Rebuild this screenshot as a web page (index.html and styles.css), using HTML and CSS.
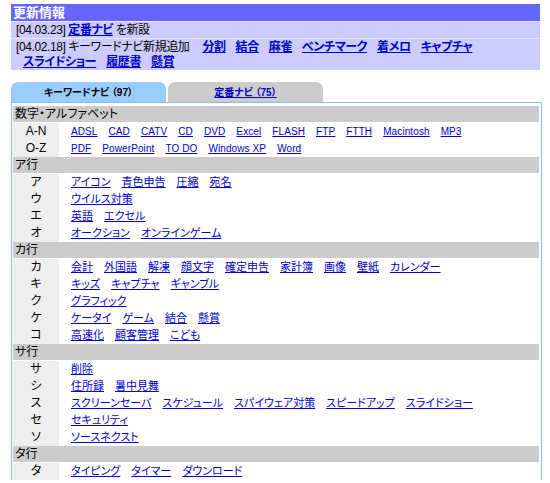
FILE: index.html
```html
<!DOCTYPE html>
<html lang="ja">
<head>
    <meta charset="UTF-8">
    <title>キーワードナビ</title>
    <link rel="stylesheet" href="styles.css">
</head>
<body>
    <div class="news">
        <div class="news-head">更新情報</div>
        <div class="news-row">[04.03.23] <a href="#">定番ナビ</a> を新設</div>
        <div class="news-row">
            <div class="line">[04.02.18] キーワードナビ新規追加
                <span class="links"><a href="#">分割</a><a href="#">結合</a><a href="#">麻雀</a><a href="#">ベンチマーク</a><a href="#">着メロ</a><a href="#">キャプチャ</a></span>
            </div>
            <div class="line indent">
                <span class="links"><a href="#">スライドショー</a><a href="#">履歴書</a><a href="#">懸賞</a></span>
            </div>
        </div>
    </div>

    <div class="tabs">
        <div class="tab active">キーワードナビ （97）</div>
        <div class="tab"><a href="#">定番ナビ （75）</a></div>
    </div>

    <div class="panel">
        <div class="group">数字・アルファベット</div>
        <div class="row latin"><div class="key">A-N</div><div class="words"><a href="#">ADSL</a><a href="#">CAD</a><a href="#">CATV</a><a href="#">CD</a><a href="#">DVD</a><a href="#">Excel</a><a href="#">FLASH</a><a href="#">FTP</a><a href="#">FTTH</a><a href="#">Macintosh</a><a href="#">MP3</a></div></div>
        <div class="row latin"><div class="key">O-Z</div><div class="words"><a href="#">PDF</a><a href="#">PowerPoint</a><a href="#">TO DO</a><a href="#">Windows XP</a><a href="#">Word</a></div></div>

        <div class="group">ア行</div>
        <div class="row"><div class="key">ア</div><div class="words"><a href="#">アイコン</a><a href="#">青色申告</a><a href="#">圧縮</a><a href="#">宛名</a></div></div>
        <div class="row"><div class="key">ウ</div><div class="words"><a href="#">ウイルス対策</a></div></div>
        <div class="row"><div class="key">エ</div><div class="words"><a href="#">英語</a><a href="#">エクセル</a></div></div>
        <div class="row"><div class="key">オ</div><div class="words"><a href="#">オークション</a><a href="#">オンラインゲーム</a></div></div>

        <div class="group">カ行</div>
        <div class="row"><div class="key">カ</div><div class="words"><a href="#">会計</a><a href="#">外国語</a><a href="#">解凍</a><a href="#">顔文字</a><a href="#">確定申告</a><a href="#">家計簿</a><a href="#">画像</a><a href="#">壁紙</a><a href="#">カレンダー</a></div></div>
        <div class="row"><div class="key">キ</div><div class="words"><a href="#">キッズ</a><a href="#">キャプチャ</a><a href="#">ギャンブル</a></div></div>
        <div class="row"><div class="key">ク</div><div class="words"><a href="#">グラフィック</a></div></div>
        <div class="row"><div class="key">ケ</div><div class="words"><a href="#">ケータイ</a><a href="#">ゲーム</a><a href="#">結合</a><a href="#">懸賞</a></div></div>
        <div class="row"><div class="key">コ</div><div class="words"><a href="#">高速化</a><a href="#">顧客管理</a><a href="#">こども</a></div></div>

        <div class="group">サ行</div>
        <div class="row"><div class="key">サ</div><div class="words"><a href="#">削除</a></div></div>
        <div class="row"><div class="key">シ</div><div class="words"><a href="#">住所録</a><a href="#">暑中見舞</a></div></div>
        <div class="row"><div class="key">ス</div><div class="words"><a href="#">スクリーンセーバ</a><a href="#">スケジュール</a><a href="#">スパイウェア対策</a><a href="#">スピードアップ</a><a href="#">スライドショー</a></div></div>
        <div class="row"><div class="key">セ</div><div class="words"><a href="#">セキュリティ</a></div></div>
        <div class="row"><div class="key">ソ</div><div class="words"><a href="#">ソースネクスト</a></div></div>

        <div class="group">タ行</div>
        <div class="row"><div class="key">タ</div><div class="words"><a href="#">タイピング</a><a href="#">タイマー</a><a href="#">ダウンロード</a></div></div>
    </div>
</body>
</html>
```

FILE: styles.css
```css
body {
    margin: 0;
    padding: 4px 10px 0 11px;
    font-family: "Liberation Sans", "Noto Sans CJK JP", sans-serif;
    font-feature-settings: "palt";
    font-size: 12px;
    color: #000;
    background: #fff;
}
a {
    color: #0000cc;
}

/* update box */
.news {
    width: 529px;
    display: grid;
    gap: 1px;
    background-color: #e6e6ff;
}
.news-head {
    height: 17px;
    line-height: 17px;
    padding-left: 2px;
    background-color: #6666ff;
    color: #fff;
    font-weight: bold;
    font-size: 13px;
}
.news-row {
    min-height: 16px;
    line-height: 16px;
    padding-left: 5px;
    background-color: #ccccff;
    letter-spacing: -0.4px;
}
.news-row a {
    font-weight: bold;
}
.news-row .line {
    height: 15px;
    line-height: 15px;
}
.news-row .line:first-child {
    margin-top: 1px;
}
.news .links a {
    margin-left: 10px;
}
.news .indent .links a:first-child {
    margin-left: 7px;
}

/* tabs */
.tabs {
    display: flex;
    gap: 2px;
    margin-top: 12px;
}
.tab {
    width: 155px;
    height: 20px;
    line-height: 21px;
    text-align: center;
    font-size: 10px;
    font-weight: bold;
    background-color: #cccccc;
    border-radius: 7px 7px 0 0;
}
.tab.active {
    background-color: #99ccff;
}

/* keyword list */
.panel {
    width: 526px;
    border: 1px solid #88bbff;
    border-bottom: none;
    padding: 3px 2px 0 1px;
}
.group {
    height: 16px;
    line-height: 17px;
    margin-bottom: 1px;
    padding-left: 2px;
    background-color: #cccccc;
}
.row {
    display: flex;
    height: 17px;
    line-height: 17px;
    font-size: 11px;
}
.row.latin .words {
    font-size: 10px;
    letter-spacing: 0.1px;
}
.key {
    width: 46px;
    flex: none;
    text-align: center;
    background-color: #eeeeee;
    font-size: 12px;
}
.words {
    display: flex;
    gap: 11px;
    padding-left: 12px;
    white-space: nowrap;
}
```
